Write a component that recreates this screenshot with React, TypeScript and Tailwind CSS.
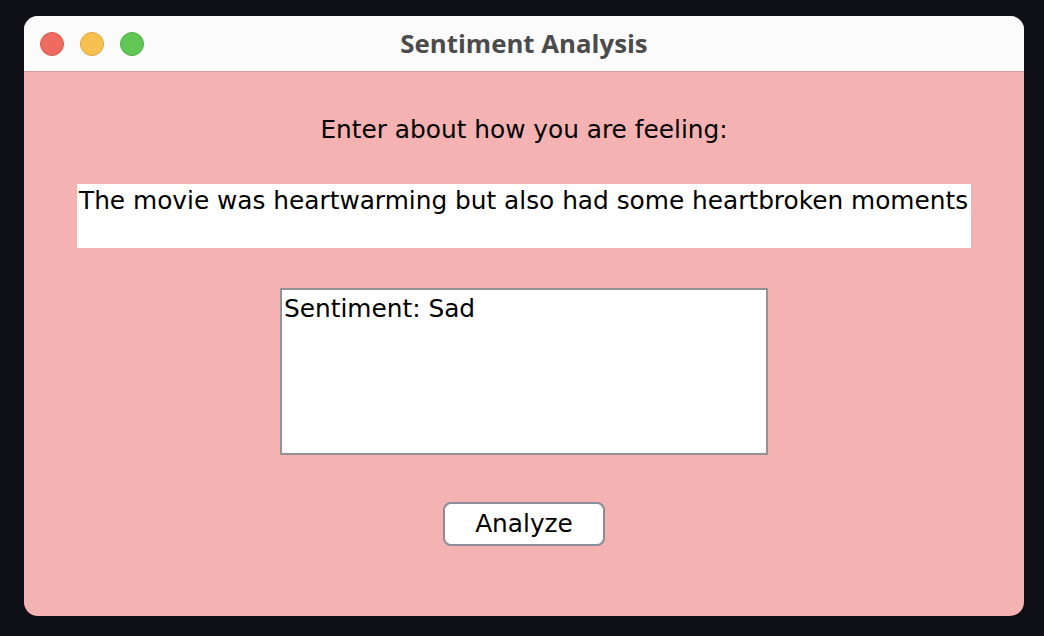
const App = () => {
  return (
    <div className="w-[1044px] h-[636px] bg-[#0e1016] pt-4 pl-6">
      <div className="w-[1000px] h-[600px] rounded-[14px] overflow-hidden flex flex-col bg-[#f4b2b2]">
        <div className="h-[56px] bg-[#fbfbfb] border-b border-[#d39a9a] relative flex items-center justify-center">
          <div className="absolute left-[16px] top-[16px] flex gap-4">
            <span className="w-6 h-6 rounded-full bg-[#ee6b60] border border-[#d95a50]" />
            <span className="w-6 h-6 rounded-full bg-[#f5c04f] border border-[#dea63c]" />
            <span className="w-6 h-6 rounded-full bg-[#62c655] border border-[#4fae44]" />
          </div>
          <span className="font-['Open_Sans',sans-serif] font-bold text-[25.8px] leading-none text-[#4b4b4b]">
            Sentiment Analysis
          </span>
        </div>
        <div className="flex-1 flex flex-col items-center font-['DejaVu_Sans',sans-serif] text-black text-[24.8px] leading-[30px]">
          <p className="mt-[43px]">Enter about how you are feeling:</p>
          <div className="mt-[39px] w-[894px] h-[64px] bg-white pl-[2px] pt-[2px] whitespace-nowrap">
            The movie was heartwarming but also had some heartbroken moments
          </div>
          <div className="mt-[40px] w-[488px] h-[167px] bg-white border-2 border-[#939393] pl-[2px] pt-[4px]">
            Sentiment: Sad
          </div>
          <button className="mt-[47px] w-[162px] h-[44px] bg-white rounded-[8px] border-2 border-[#8b8b9c] leading-none">
            Analyze
          </button>
        </div>
      </div>
    </div>
  );
};

export default App;
